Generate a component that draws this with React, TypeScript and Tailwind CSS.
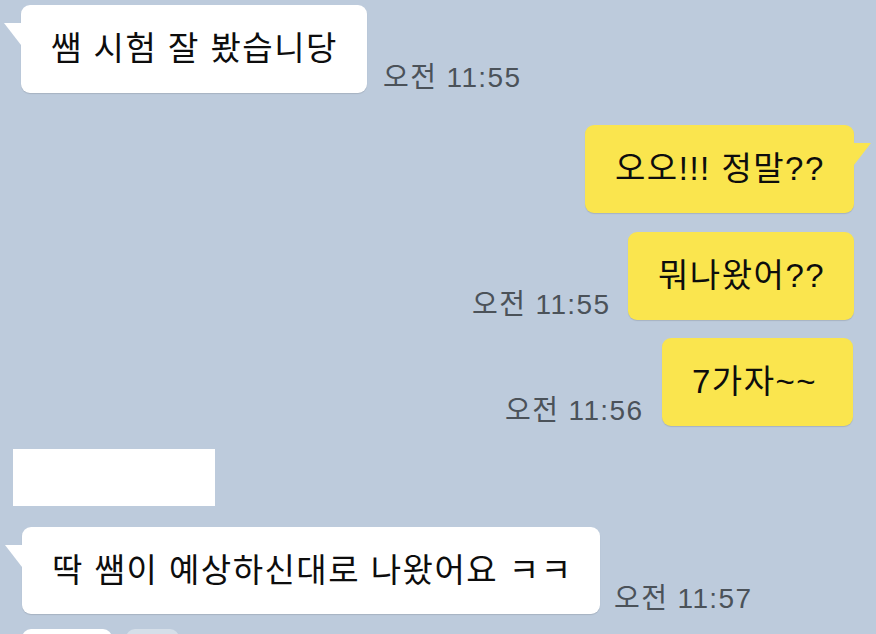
import React from 'react';

const FONT = { fontFamily: '"Liberation Sans", "Noto Sans CJK KR", sans-serif' };

function TailLeft({ color }: { color: string }) {
  return (
    <svg className="absolute left-[-17px] top-[18px]" width="19" height="22" viewBox="0 0 19 22">
      <polygon points="0,0 19,0 19,22 17,22" fill={color} />
    </svg>
  );
}

function TailRight({ color }: { color: string }) {
  return (
    <svg className="absolute right-[-17px] top-[18px]" width="19" height="22" viewBox="0 0 19 22">
      <polygon points="19,0 0,0 0,22 2,22" fill={color} />
    </svg>
  );
}

function Time({ text, width }: { text: string; width: string }) {
  return (
    <span className={`${width} shrink-0 whitespace-nowrap text-[28px] tracking-[1.4px] leading-none text-[#4b5259] mb-[1px]`}>
      {text}
    </span>
  );
}

function Msg({ children }: { children: React.ReactNode }) {
  return <span className="text-[33px] tracking-[1.5px] text-[#0d0d0d] whitespace-nowrap">{children}</span>;
}

export default function App() {
  return (
    <div style={FONT} className="w-[876px] h-[634px] overflow-hidden bg-[#bdcbdc] flex flex-col pt-[5px]">
      {/* incoming 1 */}
      <div className="shrink-0 flex items-end pl-[21px] gap-[16px]">
        <div className="relative w-[346px] h-[88px] rounded-[9px] bg-white shadow-[0_1px_1px_rgba(0,0,0,0.12)] flex items-center px-[30px]">
          <TailLeft color="#ffffff" />
          <Msg>쌤 시험 잘 봤습니당</Msg>
        </div>
        <Time text="오전 11:55" width="w-[139px]" />
      </div>

      {/* outgoing */}
      <div className="shrink-0 flex justify-end pr-[22px] mt-[32px]">
        <div className="relative w-[269px] h-[88px] rounded-[9px] bg-[#fae54e] shadow-[0_1px_1px_rgba(0,0,0,0.12)] flex items-center px-[30px]">
          <TailRight color="#fae54e" />
          <Msg>오오!!! 정말??</Msg>
        </div>
      </div>

      <div className="shrink-0 flex justify-end items-end pr-[22px] mt-[19px] gap-[16px]">
        <Time text="오전 11:55" width="w-[140px]" />
        <div className="w-[226px] h-[88px] rounded-[9px] bg-[#fae54e] shadow-[0_1px_1px_rgba(0,0,0,0.12)] flex items-center px-[30px]">
          <Msg>뭐나왔어??</Msg>
        </div>
      </div>

      <div className="shrink-0 flex justify-end items-end pr-[23px] mt-[18px] gap-[17px]">
        <Time text="오전 11:56" width="w-[140px]" />
        <div className="w-[191px] h-[88px] rounded-[9px] bg-[#fae54e] shadow-[0_1px_1px_rgba(0,0,0,0.12)] flex items-center px-[30px]">
          <Msg>7가자~~</Msg>
        </div>
      </div>

      {/* redacted name */}
      <div className="shrink-0 ml-[13px] mt-[23px] w-[202px] h-[57px] bg-white" />

      {/* incoming 2 */}
      <div className="shrink-0 flex items-end pl-[22px] gap-[14px] mt-[21px]">
        <div className="relative w-[578px] h-[87px] rounded-[9px] bg-white shadow-[0_1px_1px_rgba(0,0,0,0.12)] flex items-center px-[30px]">
          <TailLeft color="#ffffff" />
          <Msg>딱 쌤이 예상하신대로 나왔어요 ㅋㅋ</Msg>
        </div>
        <Time text="오전 11:57" width="w-[140px]" />
      </div>

      {/* next messages peeking in */}
      <div className="shrink-0 flex items-start pl-[22px] gap-[14px] mt-[15px]">
        <div className="w-[90px] h-[30px] rounded-t-[9px] bg-white" />
        <div className="w-[53px] h-[30px] rounded-t-[9px] bg-[#d6dfe9]" />
      </div>
    </div>
  );
}
